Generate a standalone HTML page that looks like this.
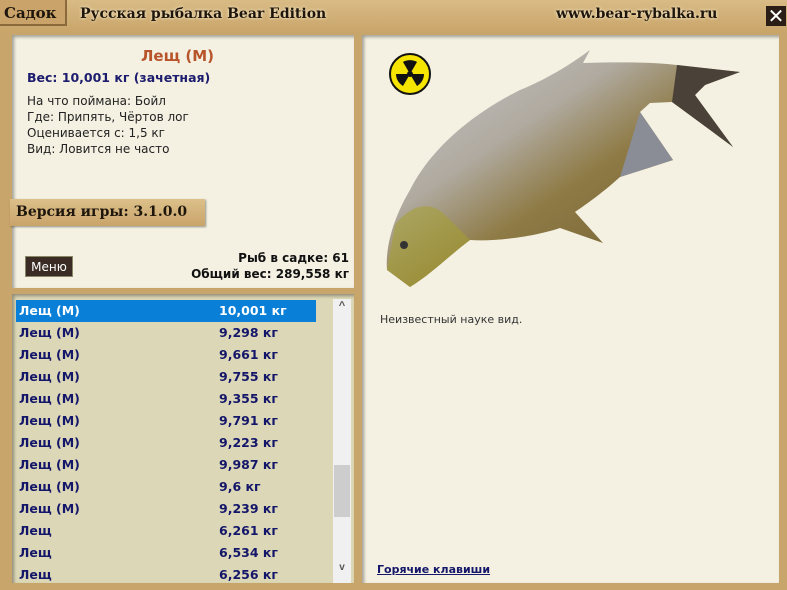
<!DOCTYPE html>
<html><head><meta charset="utf-8"><style>
*{margin:0;padding:0;box-sizing:border-box}
body{width:787px;height:590px;overflow:hidden;background:#c8a56b;font-family:"DejaVu Sans",Verdana,sans-serif;position:relative}
.abs{position:absolute}
.serif{font-family:"DejaVu Serif","Liberation Serif",serif;font-weight:bold}
.panel{position:absolute;background:#f4f1e2;box-shadow:inset 2px 2px 3px rgba(0,0,0,.35)}
.list{position:absolute;left:12px;top:294px;width:342px;height:289px;background:#dcd8b7;box-shadow:inset 2px 2px 3px rgba(0,0,0,.35);overflow:hidden}
.row{position:absolute;left:4px;height:22px;width:300px;font:bold 12.5px "DejaVu Sans",Verdana,sans-serif;color:#14166a;line-height:22px}
.row span{position:absolute;left:203px}
.row b{position:absolute;left:3px;font-weight:bold}
.sel{background:#0a7fd8;color:#fff}
</style></head><body>
<div class="abs" style="left:0;top:0;width:787px;height:32px;background:linear-gradient(#d9bb85,#c9a56a)"></div>
<div class="abs serif" style="left:0;top:0;width:67px;height:26px;background:#c9a36a;border-right:2px solid #8a6a3a;border-bottom:2px solid #8a6a3a;font-size:15px;line-height:26px;padding-left:4px;color:#1e160c">Садок</div>
<div class="abs serif" style="left:80px;top:6px;font-size:14px;color:#1e160c;text-shadow:0 0 3px #fff5dd">Русская рыбалка Bear Edition</div>
<div class="abs serif" style="left:556px;top:6px;font-size:14px;color:#1e160c;text-shadow:0 0 3px #fff5dd">www.bear-rybalka.ru</div>
<div class="abs" style="left:766px;top:6px;width:20px;height:20px;background:#2a1e16;color:#fff;font:bold 20px/20px 'DejaVu Sans',sans-serif;text-align:center">✕</div>

<div class="panel" style="left:12px;top:35px;width:342px;height:253px"></div>
<div class="abs" style="left:0;top:47px;width:355px;text-align:center;font:bold 15px 'DejaVu Sans',sans-serif;color:#b8542a">Лещ (М)</div>
<div class="abs" style="left:27px;top:70px;font:bold 12.5px 'DejaVu Sans',sans-serif;color:#1c1c6e">Вес: 10,001 кг (зачетная)</div>
<div class="abs" style="left:27px;top:93px;font-size:12px;line-height:16px;color:#222">На что поймана: Бойл<br>Где: Припять, Чёртов лог<br>Оценивается с: 1,5 кг<br>Вид: Ловится не часто</div>
<div class="abs serif" style="left:10px;top:199px;width:195px;height:27px;background:linear-gradient(#dcc08a,#c9a46a);box-shadow:1px 1px 2px rgba(0,0,0,.4);font-size:14px;line-height:27px;padding-left:6px;color:#1e160c">Версия игры: 3.1.0.0</div>
<div class="abs" style="left:25px;top:256px;width:48px;height:21px;background:#3a2c24;color:#fff;font-size:12px;line-height:21px;text-align:center;border:1px solid #886">Меню</div>
<div class="abs" style="right:438px;top:250px;text-align:right;font:bold 12px/16px 'DejaVu Sans',sans-serif;color:#111">Рыб в садке: 61<br>Общий вес: 289,558 кг</div>

<div class="list">
<div class="row sel" style="top:6px"><b>Лещ (М)</b><span>10,001 кг</span></div>
<div class="row" style="top:28px"><b>Лещ (М)</b><span>9,298 кг</span></div>
<div class="row" style="top:50px"><b>Лещ (М)</b><span>9,661 кг</span></div>
<div class="row" style="top:72px"><b>Лещ (М)</b><span>9,755 кг</span></div>
<div class="row" style="top:94px"><b>Лещ (М)</b><span>9,355 кг</span></div>
<div class="row" style="top:116px"><b>Лещ (М)</b><span>9,791 кг</span></div>
<div class="row" style="top:138px"><b>Лещ (М)</b><span>9,223 кг</span></div>
<div class="row" style="top:160px"><b>Лещ (М)</b><span>9,987 кг</span></div>
<div class="row" style="top:182px"><b>Лещ (М)</b><span>9,6 кг</span></div>
<div class="row" style="top:204px"><b>Лещ (М)</b><span>9,239 кг</span></div>
<div class="row" style="top:226px"><b>Лещ</b><span>6,261 кг</span></div>
<div class="row" style="top:248px"><b>Лещ</b><span>6,534 кг</span></div>
<div class="row" style="top:270px"><b>Лещ</b><span>6,256 кг</span></div>
<div class="abs" style="left:321px;top:5px;width:18px;height:284px;background:#f0f0f0"></div>
<div class="abs" style="left:322px;top:171px;width:16px;height:52px;background:#cdcdcd"></div>
<div class="abs" style="left:321px;top:6px;width:18px;text-align:center;font:bold 11px sans-serif;color:#555">^</div>
<div class="abs" style="left:321px;top:268px;width:18px;text-align:center;font:bold 10px sans-serif;color:#555">v</div>
</div>

<div class="panel" style="left:362px;top:35px;width:417px;height:548px"></div>
<svg class="abs" style="left:362px;top:35px" width="417" height="548" viewBox="362 35 417 548">
<defs>
<linearGradient id="g" x1="0" y1="0" x2="1" y2="1">
<stop offset="0" stop-color="#c8c8cc"/><stop offset=".35" stop-color="#b0aaa0"/><stop offset=".55" stop-color="#8e7a44"/><stop offset="1" stop-color="#6a5830"/></linearGradient>
</defs>
<path fill="url(#g)" d="M387,270 C385,245 395,215 410,190 C430,150 470,115 520,90 C545,80 570,65 590,50 L583,63 C620,62 650,62 677,65 L740,72 L705,85 L695,95 L733,147 C710,130 690,115 672,102 L650,103 L640,112 L673,160 L620,177 C600,195 585,205 575,212 L603,243 L560,228 C540,235 500,242 470,240 C450,255 430,275 410,287 Z"/>
<path fill="#4a4238" d="M677,65 L740,72 L705,85 L695,95 L733,147 C710,130 690,115 672,102 Z"/>
<path fill="#8a8d95" d="M640,112 L673,160 L620,177 Z"/>
<path fill="#a5a030" opacity=".55" d="M395,225 C410,205 430,200 445,215 L470,240 C450,255 430,275 410,287 L387,270 Z"/>
<circle cx="404" cy="245" r="4" fill="#333"/>
<circle cx="410" cy="74" r="20" fill="#f5e400" stroke="#111" stroke-width="2"/>
<g fill="#111"><circle cx="410" cy="74" r="3"/>
<path d="M410,74 L403,62 A14,14 0 0 1 417,62 Z"/>
<path d="M410,74 L424,74 A14,14 0 0 1 417,86 Z"/>
<path d="M410,74 L403,86 A14,14 0 0 1 396,74 Z"/></g>
</svg>
<div class="abs" style="left:380px;top:313px;font-size:11px;color:#333">Неизвестный науке вид.</div>
<div class="abs" style="left:377px;top:563px;font:bold 11px 'DejaVu Sans',sans-serif;color:#14166a;text-decoration:underline">Горячие клавиши</div>
</body></html>
